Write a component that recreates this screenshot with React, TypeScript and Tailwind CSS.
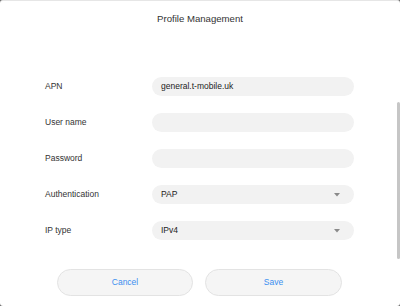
import React from "react";

const Row = ({ label, value, select }: { label: string; value?: string; select?: boolean }) => (
  <div className="flex items-center h-[19px]">
    <div className="w-[107px] text-[8.5px] text-[#333]">{label}</div>
    <div className="relative w-[202px] h-[19px] rounded-full bg-[#f2f2f2] flex items-center pl-[9px] text-[8.5px] text-[#222]">
      {value}
      {select && (
        <svg className="absolute left-[182px] top-[8px]" width="6" height="4" viewBox="0 0 6 4">
          <polygon points="0,0 6,0 3,3.5" fill="#8a8a8a" />
        </svg>
      )}
    </div>
  </div>
);

export default function App() {
  return (
    <div className="w-[400px] h-[306px] bg-[#6b6b6b] overflow-hidden" style={{ fontFamily: '"Liberation Sans", Arial, sans-serif' }}>
      <div className="relative w-full h-full bg-white rounded-[3px] border-t border-[#e6e6e6] overflow-hidden">
        <div className="h-[37px] flex items-center justify-center text-[9.6px] text-[#333]">Profile Management</div>
        <div className="flex flex-col gap-[17px] pl-[45px] pt-[39px]">
          <Row label="APN" value="general.t-mobile.uk" />
          <Row label="User name" />
          <Row label="Password" />
          <Row label="Authentication" value="PAP" select />
          <Row label="IP type" value="IPv4" select />
        </div>
        <div className="flex justify-center gap-[12px] mt-[29px] pr-[1px]">
          <button className="w-[136px] h-[27px] rounded-full bg-[#f5f5f5] border border-[#e3e3e3] text-[8.5px] text-[#3b8ff0]">Cancel</button>
          <button className="w-[137px] h-[27px] rounded-full bg-[#f5f5f5] border border-[#e3e3e3] text-[8.5px] text-[#3b8ff0]">Save</button>
        </div>
        <div className="absolute right-0 top-[101px] w-[3px] h-[157px] bg-[#c6c6c6] rounded-full" />
      </div>
    </div>
  );
}
